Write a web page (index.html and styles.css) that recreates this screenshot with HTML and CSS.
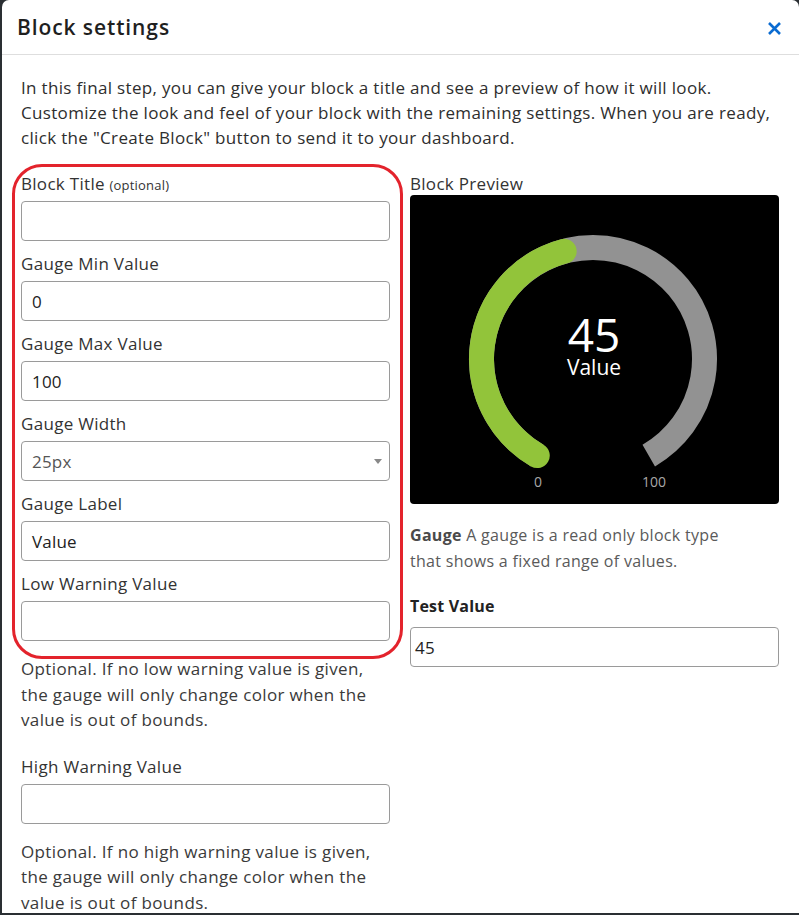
FILE: index.html
```html
<!DOCTYPE html>
<html>
<head>
<meta charset="utf-8">
<link rel="stylesheet" href="styles.css">
</head>
<body>
<div class="modal">
  <div class="modal-header">
    <h1 class="modal-title">Block settings</h1>
    <span class="close" aria-label="Close">
      <svg width="15" height="15" viewBox="0 0 15 15"><path d="M2 2 L13 13 M13 2 L2 13" stroke="#0a6bd1" stroke-width="2.6" stroke-linecap="butt"/></svg>
    </span>
  </div>
  <div class="modal-body">
    <p class="intro">In this final step, you can give your block a title and see a preview of how it will look.<br>Customize the look and feel of your block with the remaining settings. When you are ready,<br>click the "Create Block" button to send it to your dashboard.</p>
    <div class="columns">
      <div class="col-left">
        <div class="highlight"></div>
        <div class="field">
          <label class="label">Block Title <small class="opt">(optional)</small></label>
          <div class="input"></div>
        </div>
        <div class="field">
          <label class="label">Gauge Min Value</label>
          <div class="input">0</div>
        </div>
        <div class="field">
          <label class="label">Gauge Max Value</label>
          <div class="input">100</div>
        </div>
        <div class="field">
          <label class="label">Gauge Width</label>
          <div class="input select">25px<span class="caret"></span></div>
        </div>
        <div class="field">
          <label class="label">Gauge Label</label>
          <div class="input">Value</div>
        </div>
        <div class="field">
          <label class="label">Low Warning Value</label>
          <div class="input"></div>
        </div>
        <p class="help">Optional. If no low warning value is given,<br>the gauge will only change color when the<br>value is out of bounds.</p>
        <div class="field">
          <label class="label">High Warning Value</label>
          <div class="input"></div>
        </div>
        <p class="help">Optional. If no high warning value is given,<br>the gauge will only change color when the<br>value is out of bounds.</p>
      </div>
      <div class="col-right">
        <div class="label preview-label">Block Preview</div>
        <div class="preview">
          <svg width="369" height="309" viewBox="0 0 369 309">
            <path d="M 127.25 260.56 A 111.5 111.5 0 1 1 238.75 260.56" fill="none" stroke="#929292" stroke-width="25"/>
            <path d="M 127.25 260.56 A 111.5 111.5 0 0 1 154.14 56.3" fill="none" stroke="#92c43a" stroke-width="25" stroke-linecap="round"/>
            <text x="184" y="157" class="g-value" text-anchor="middle">45</text>
            <text x="184" y="180" class="g-label" text-anchor="middle">Value</text>
            <text x="128" y="292" class="g-tick" text-anchor="middle">0</text>
            <text x="244" y="292" class="g-tick" text-anchor="middle">100</text>
          </svg>
        </div>
        <p class="desc"><b>Gauge</b> A gauge is a read only block type<br>that shows a fixed range of values.</p>
        <div class="label bold">Test Value</div>
        <div class="input test">45</div>
      </div>
    </div>
  </div>
</div>
</body>
</html>
```

FILE: styles.css
```css
html, body {
  margin: 0;
  padding: 0;
}
body {
  background: #2a2f33;
  height: 915px;
  overflow: hidden;
  font-family: "Open Sans", "Liberation Sans", sans-serif;
  color: #333;
}
.modal {
  margin-left: 2px;
  width: 797px;
  height: 913px;
  background: #fff;
  border-radius: 7px 7px 0 0;
  overflow: hidden;
}
.modal-header {
  height: 54px;
  border-bottom: 1px solid #dedede;
  display: flex;
  align-items: center;
  justify-content: space-between;
  padding: 0 17px 0 15px;
}
.modal-title {
  margin: 0;
  font-size: 21px;
  font-weight: 600;
  letter-spacing: 0.9px;
  color: #1f1f1f;
}
.close {
  display: flex;
  width: 15px;
  height: 15px;
  margin-top: 2px;
}
.modal-body {
  padding: 20px 20px 0 19px;
}
.intro {
  margin: 0;
  font-size: 17px;
  letter-spacing: 0.33px;
  line-height: 25px;
  color: #2e2e2e;
}
.columns {
  display: grid;
  grid-template-columns: 369px 369px;
  column-gap: 20px;
  margin-top: 23px;
}
.col-left {
  position: relative;
}
.highlight {
  position: absolute;
  left: -9px;
  top: -9px;
  width: 385px;
  height: 489px;
  border: 3px solid #e3232c;
  border-radius: 30px;
  pointer-events: none;
}
.field {
  margin-bottom: 12px;
}
.label {
  display: block;
  font-size: 17px;
  letter-spacing: 0.3px;
  line-height: 22px;
  height: 22px;
  margin-bottom: 6px;
  color: #333;
  font-weight: 400;
}
.opt {
  font-size: 13px;
  letter-spacing: 0.2px;
  line-height: 1;
}
.preview-label {
  margin-bottom: 0;
}
.label.bold {
  font-size: 16px;
  letter-spacing: 0.2px;
  font-weight: 700;
  color: #222;
  margin-bottom: 10px;
}
.input {
  box-sizing: border-box;
  height: 40px;
  border: 1px solid #9a9a9a;
  border-radius: 4px;
  padding: 0 10px;
  display: flex;
  align-items: center;
  font-size: 17px;
  letter-spacing: 0.2px;
  color: #222;
  position: relative;
}
.select {
  color: #555;
  padding-left: 10px;
}
.caret {
  position: absolute;
  right: 7px;
  top: 17px;
  width: 0;
  height: 0;
  border-left: 4px solid transparent;
  border-right: 4px solid transparent;
  border-top: 5px solid #888;
}
.help {
  margin: 15px 0 23px;
  font-size: 17px;
  letter-spacing: 0.35px;
  line-height: 25.5px;
  color: #3a3a3a;
}
.preview {
  background: #000;
  border-radius: 4px;
  height: 309px;
  overflow: hidden;
}
.preview svg {
  display: block;
}
.g-value {
  font-family: "Open Sans", sans-serif;
  font-size: 46px;
  fill: #fff;
}
.g-label {
  font-family: "Open Sans", sans-serif;
  font-size: 21px;
  fill: #fff;
}
.g-tick {
  font-family: "Open Sans", sans-serif;
  font-size: 14px;
  fill: #a8a8a8;
}
.desc {
  margin: 18px 0 21px;
  font-size: 16px;
  letter-spacing: 0.3px;
  line-height: 26px;
  color: #5a5a5a;
}
.desc b {
  color: #4a4a4a;
}
.input.test {
  padding-left: 4px;
  height: 40px;
}
```
